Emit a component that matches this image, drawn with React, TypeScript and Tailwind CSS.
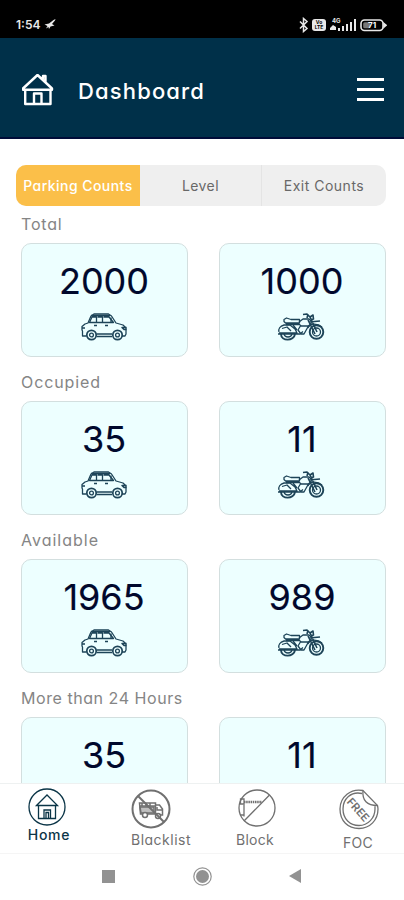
import { ReactNode } from 'react'
import clsx from 'clsx'

interface Section {
  label: string
  cars: number
  bikes: number
  className: string
}

const SECTIONS: Section[] = [
  { label: 'Total', cars: 2000, bikes: 1000, className: 'tracking-[0.8px]' },
  { label: 'Occupied', cars: 35, bikes: 11, className: 'tracking-[0.9px]' },
  { label: 'Available', cars: 1965, bikes: 989, className: 'tracking-[1px]' },
  { label: 'More than 24 Hours', cars: 35, bikes: 11, className: 'tracking-[0.55px]' },
]

function StatusBar() {
  return (
    <div className="flex h-[38px] shrink-0 items-center justify-between bg-black pt-[12px] pr-[17px] pl-4 text-[#e8e8e8]">
      <div className="flex items-center gap-1">
        <span className="text-[12px] leading-none font-semibold">1:54</span>
        <svg width="12" height="12" viewBox="0 0 12 12" fill="currentColor">
          <path d="M0.5 5.5 5 4.500 9.500 1 11.500 0 11 1.500 8 5 10.500 6.500 6.500 7.500 5 10 4.500 8 2 9.500 3.500 7Z" />
        </svg>
      </div>
      <div className="flex items-center">
        <svg width="10" height="16" viewBox="0 0 10 16" fill="none" stroke="currentColor" strokeWidth="1.5">
          <path d="m1 4.5 7 7-3.5 3V1.5L8 4.5l-7 7" />
        </svg>
        <div className="ml-[3px] flex h-3 w-[14px] flex-col items-center justify-center rounded-[3px] bg-[#e8e8e8] text-[5px] leading-[5px] font-bold text-black">
          <span>Vo</span>
          <span>LTE</span>
        </div>
        <svg className="ml-1" width="26" height="14" viewBox="0 0 26 14" fill="currentColor">
          <text x="2" y="5" fontSize="6" fontWeight="700">4G</text>
          <path d="M0 10l3-3 3 2v3H0zM8 10h2v3H8zM12 8h2v5h-2zM16 6h2v7h-2zM20 4h2v9h-2zM24 1h2v12h-2z" />
        </svg>
        <svg className="ml-1" width="27" height="13" viewBox="0 0 27 13" fill="none" stroke="currentColor" strokeWidth="1.6">
          <rect x="1" y="1" width="22" height="10.5" rx="3.5" />
          <rect x="3.2" y="3.3" width="7" height="6" rx="1.5" fill="#777" stroke="none" />
          <path d="M24 4.5 26 6.2 24 8Z" fill="currentColor" />
          <text x="8" y="9.3" fontSize="8" fontWeight="700" fill="#fff" stroke="none">71</text>
        </svg>
      </div>
    </div>
  )
}

function Header() {
  return (
    <header className="flex h-[101px] shrink-0 items-center border-b-2 border-[#000c38] bg-[#003049] pt-[4px] pr-5 pl-[22px] text-white">
      <svg width="32" height="32" viewBox="0 0 32 32" fill="none" stroke="currentColor" strokeWidth="2.4" strokeLinejoin="round">
        <path d="M1 14.5 15.5 1 30 14.5v1.3H1ZM3.2 16v14h25.3V16M12 30V19.5h7.5V30M21 5V2h2.500v6" />
      </svg>
      <h1 className="ml-6 flex-1 pt-[3px] text-[22px] font-medium tracking-[1.15px]">Dashboard</h1>
      <button className="flex w-[27px] flex-col gap-[7px]">
        <span className="h-[3px] bg-white" />
        <span className="h-[3px] bg-white" />
        <span className="h-[3px] bg-white" />
      </button>
    </header>
  )
}

function Tabs() {
  return (
    <div className="mr-[18px] ml-4 flex h-[41px] shrink-0 overflow-hidden rounded-[10px] bg-[#efefef] text-[14px] text-[#686868]">
      <button className="w-[124px] bg-[#fbbf49] pb-px font-medium tracking-[0.45px] whitespace-nowrap text-white">
        Parking Counts
      </button>
      <button className="w-[122px] border-r border-[#e4e4e4] pb-px tracking-[0.4px]">Level</button>
      <button className="flex-1 pb-px tracking-[0.5px]">Exit Counts</button>
    </div>
  )
}

function CarIcon() {
  return (
    <svg width="48" height="28" viewBox="0 0 48 28" fill="none" stroke="#1d4458" strokeWidth="1.3" strokeLinejoin="round">
      <path d="M5.500 23H1.500v-5l-.5-1v-3.500l3-2.500 3-1 3-7 3-2h14.500l3 2 4.500 7 7 2 3 3v6l-1 2h-4M15.500 23.500H31" />
      <path d="M8.500 9.500 11 4h4.500v5.500ZM16.500 4h5v5.500M22.500 4H28l4.500 5.500H8.500M10 2.500h19" />
      <path d="M13 12.500h3M24 12.500h3M45.500 14.500H41l2 2h2.500M1 15h3M15.500 21H31" strokeWidth="1.500" />
      <path d="M30 4.500v5" />
      <circle cx="10.500" cy="22" r="4.700" strokeWidth="1.700" fill="#edffff" />
      <circle cx="36.500" cy="22" r="4.700" strokeWidth="1.700" fill="#edffff" />
      <circle cx="10.500" cy="22" r="1.900" />
      <circle cx="36.500" cy="22" r="1.900" />
    </svg>
  )
}

function BikeIcon() {
  return (
    <svg className="-ml-[3px]" width="48" height="28" viewBox="0 0 48 28" fill="none" stroke="#1d4458" strokeWidth="1.3" strokeLinejoin="round">
      <path d="M7 6.500 9.500 5l4.500 1.500h8.500V10H8.500L7 8.500ZM9 11.500h13" />
      <path d="M2 19c-1-3 1-6 5-7h6l5 4 2 4H2M1 21h22l3-2.500M16 12l4 5M5 15.500l5-1.500 4 4" />
      <path d="m22 9 4-3h6l3 3-3 4h-8l-2-2M24 12l-3 5 3 4h3l5-9" />
      <path d="m26 1.500 4-.5 3 3 7 15M31 1l-1 4M33 4l3-2 .5 4-3 1M32 9l11-1M31 7l7 14" strokeWidth="1.600" />
      <path d="M31 15c2-5 9-5 14-1" />
      <circle cx="39.500" cy="19" r="6.800" strokeWidth="1.900" />
      <circle cx="39.500" cy="19" r="4" />
      <path d="M4 21c0 7.500 13 7.500 14 0" strokeWidth="1.900" />
      <path d="M7 21c1 4 7 4 8 0" />
    </svg>
  )
}

function CountCard({ count, children }: { count: number; children: ReactNode }) {
  return (
    <div className="flex h-[114px] w-[167px] flex-col items-center rounded-[10px] border border-[#d3dfdf] bg-[#edffff] pt-[17px]">
      <span className="-ml-[1px] text-[36px] leading-10 text-[#00082c] [-webkit-text-stroke:0.15px_#00082c]">{count}</span>
      <div className="mt-[12px]">{children}</div>
    </div>
  )
}

interface NavItemProps {
  label: string
  active?: boolean
  className: string
  labelClass: string
  children: ReactNode
}

function NavItem({ label, active, className, labelClass, children }: NavItemProps) {
  return (
    <button className={clsx('flex flex-col items-center', active ? 'text-[#0b3547]' : 'text-[#707070]', className)}>
      {children}
      <span className={clsx('text-[14px] leading-[18px]', active && 'font-medium', labelClass)}>{label}</span>
    </button>
  )
}

function BottomNav() {
  return (
    <nav className="flex h-[70px] shrink-0 items-start border-t border-[#eef1f1] bg-white">
      <NavItem label="Home" active className="ml-[24px] w-[48px] pt-1" labelClass="ml-0.5 tracking-[0.7px]">
        <svg className="-ml-[2px]" width="38" height="38" viewBox="0 0 38 38" fill="none" stroke="currentColor" strokeWidth="1.3">
          <circle cx="19" cy="19" r="18" />
          <path d="M8.500 17.500 19 7l10.500 10.500ZM10.500 18v12.500h17V18M16 30V22h6.500v8M18 30v-5.500h2.500V30" />
        </svg>
      </NavItem>
      <NavItem label="Blacklist" className="ml-[54px] w-[70px] pt-[5px]" labelClass="mt-[2px] tracking-[0.5px]">
        <svg className="-ml-5" width="40" height="40" viewBox="0 0 40 40" fill="none" stroke="currentColor" strokeWidth="1.500">
          <circle cx="20" cy="20" r="18.500" strokeWidth="2" />
          <path d="M8.500 14h16v11H9.500ZM8.500 17h16M11 14.500v3M15 14.500v3M19 14.500v3" />
          <path d="M9 18h14v6H10Z" fill="currentColor" fillOpacity=".45" />
          <path d="M24.500 16h4l3 4v6h-7M26 18v3h5" />
          <circle cx="14" cy="26" r="2.500" fill="white" />
          <circle cx="27" cy="27" r="2.500" fill="white" />
          <path d="m7 7 26 26" strokeWidth="2" />
        </svg>
      </NavItem>
      <NavItem label="Block" className="ml-[34px] w-[50px] pt-1" labelClass="mt-[3px] tracking-[0.3px]">
        <svg className="ml-[3px]" width="40" height="40" viewBox="0 0 40 40" fill="none" stroke="currentColor" strokeWidth="1.300">
          <circle cx="20" cy="20" r="18" />
          <path d="M32.500 7 7 33M7 16.500v12" />
          <path d="M7 14h18" strokeWidth="2.500" strokeDasharray="1.500 .7" />
          <path d="M3.500 11h3.500v5H3.500ZM3 27h4" />
        </svg>
      </NavItem>
      <NavItem label="FOC" className="ml-[54px] w-[48px] pt-[5px]" labelClass="mt-[4px] tracking-[0.2px]">
        <svg className="ml-px" width="40" height="41" viewBox="0 0 40 41" fill="none" stroke="currentColor" strokeWidth="1.300">
          <path d="M24 1.500C12-1 1 8 1 20s8 19.500 19 19.500S39 31 39 20c0-1-.2-2-.5-3.500Z" />
          <path d="M23 4.500C12 2 4 10 4 20s7 16.500 16 16.500S36 29 36 20v-3M24 1.500c-1 10 4 15 14.500 15" />
          <text
            x="20"
            y="25"
            fontSize="11"
            fontWeight="600"
            textAnchor="middle"
            textLength="27"
            fill="currentColor"
            stroke="none"
            transform="rotate(48 20 20)"
          >
            FREE
          </text>
        </svg>
      </NavItem>
    </nav>
  )
}

function SystemBar() {
  return (
    <div className="flex h-[47px] shrink-0 items-center border-t border-[#f5f5f5] bg-white pb-[2px] text-[#929292]">
      <div className="ml-[102px] size-[13px] bg-current" />
      <svg className="ml-[78px]" width="19" height="19" viewBox="0 0 19 19" fill="none" stroke="currentColor">
        <circle cx="9.500" cy="9.500" r="8.700" strokeWidth="1.200" />
        <circle cx="9.500" cy="9.500" r="6.500" fill="currentColor" stroke="none" />
      </svg>
      <svg className="ml-[77px]" width="12" height="14" viewBox="0 0 12 14" fill="currentColor">
        <path d="M12 0v14L0 7Z" />
      </svg>
    </div>
  )
}

export default function App() {
  return (
    <div className="flex h-[900px] w-[404px] flex-col overflow-hidden bg-white font-['Inter',sans-serif] [font-feature-settings:'cv11']">
      <StatusBar />
      <Header />
      <main className="flex min-h-0 flex-1 flex-col overflow-hidden pt-[26px]">
        <Tabs />
        <div className="mt-[3px] flex flex-col gap-[10px] pl-[21px]">
          {SECTIONS.map(section => (
            <section key={section.label}>
              <h2 className={clsx('mb-1 flex h-[30px] items-center text-[16px] text-[#858585]', section.className)}>
                {section.label}
              </h2>
              <div className="flex gap-[31px]">
                <CountCard count={section.cars}>
                  <CarIcon />
                </CountCard>
                <CountCard count={section.bikes}>
                  <BikeIcon />
                </CountCard>
              </div>
            </section>
          ))}
        </div>
      </main>
      <BottomNav />
      <SystemBar />
    </div>
  )
}
